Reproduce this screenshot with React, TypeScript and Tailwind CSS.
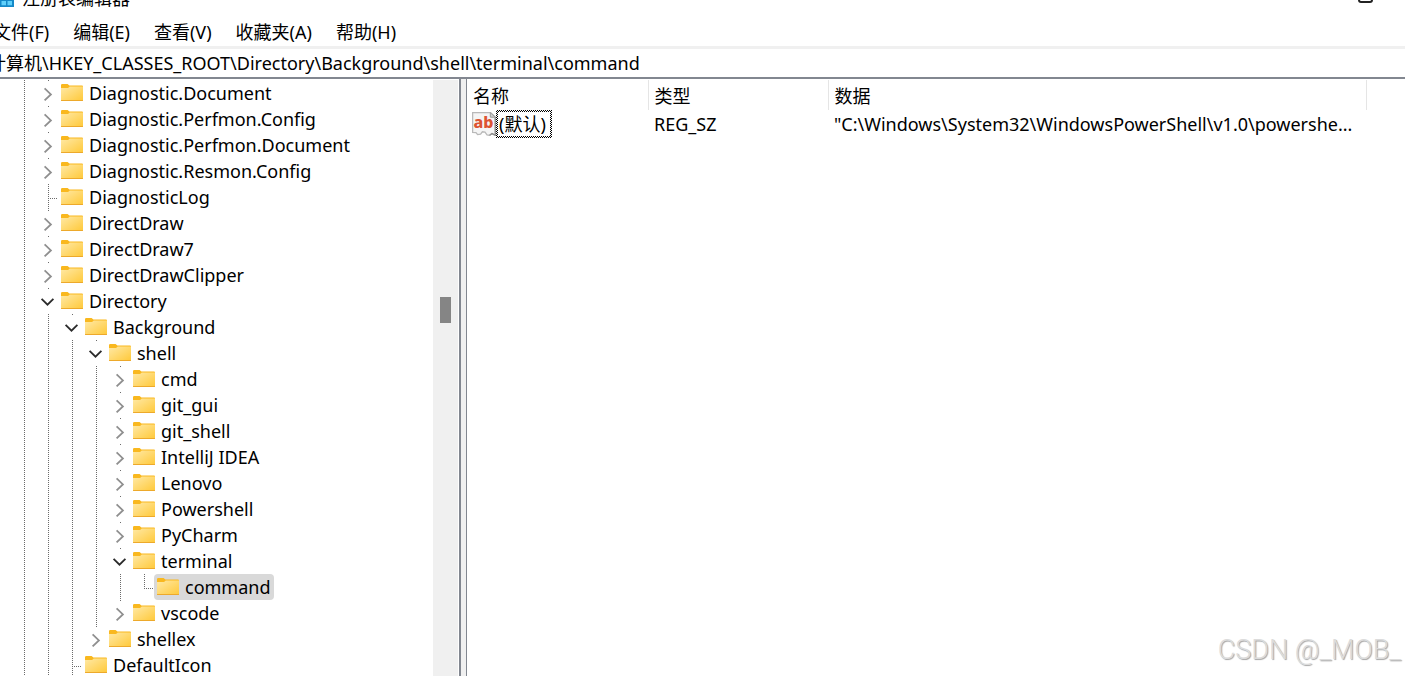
import React from "react";

type NodeKind = "open" | "closed" | "leaf" | "last";

interface TreeRow {
  name: string;
  depth: number;
  kind: NodeKind;
  selected?: boolean;
}

const rows: TreeRow[] = [
  { name: "Diagnostic.Document", depth: 1, kind: "closed" },
  { name: "Diagnostic.Perfmon.Config", depth: 1, kind: "closed" },
  { name: "Diagnostic.Perfmon.Document", depth: 1, kind: "closed" },
  { name: "Diagnostic.Resmon.Config", depth: 1, kind: "closed" },
  { name: "DiagnosticLog", depth: 1, kind: "leaf" },
  { name: "DirectDraw", depth: 1, kind: "closed" },
  { name: "DirectDraw7", depth: 1, kind: "closed" },
  { name: "DirectDrawClipper", depth: 1, kind: "closed" },
  { name: "Directory", depth: 1, kind: "open" },
  { name: "Background", depth: 2, kind: "open" },
  { name: "shell", depth: 3, kind: "open" },
  { name: "cmd", depth: 4, kind: "closed" },
  { name: "git_gui", depth: 4, kind: "closed" },
  { name: "git_shell", depth: 4, kind: "closed" },
  { name: "IntelliJ IDEA", depth: 4, kind: "closed" },
  { name: "Lenovo", depth: 4, kind: "closed" },
  { name: "Powershell", depth: 4, kind: "closed" },
  { name: "PyCharm", depth: 4, kind: "closed" },
  { name: "terminal", depth: 4, kind: "open" },
  { name: "command", depth: 5, kind: "last", selected: true },
  { name: "vscode", depth: 4, kind: "closed" },
  { name: "shellex", depth: 3, kind: "closed" },
  { name: "DefaultIcon", depth: 2, kind: "leaf" },
];

const menus = ["文件(F)", "编辑(E)", "查看(V)", "收藏夹(A)", "帮助(H)"];

function Guide({ kind }: { kind: NodeKind | "line" }) {
  return (
    <svg className="h-[26px] w-6 shrink-0" viewBox="0 0 24 26" fill="none" aria-hidden="true">
      {(kind === "line" || kind === "leaf") && (
        <path d="M14.5 0V26" stroke="#6b6b6b" strokeDasharray="1 1" />
      )}
      {kind === "last" && <path d="M14.5 0V14" stroke="#6b6b6b" strokeDasharray="1 1" />}
      {(kind === "leaf" || kind === "last") && (
        <path d="M14 14.5H24" stroke="#6b6b6b" strokeDasharray="1 1" />
      )}
      {(kind === "open" || kind === "closed") && <path d="M14.5 0V1" stroke="#6b6b6b" />}
      {kind === "closed" && <path d="M10.6 8.4L16.9 14.4L10.6 20.4" stroke="#8f8f8f" strokeWidth="1.8" />}
      {kind === "open" && <path d="M7.6 10.8L13.5 16.7L19.4 10.8" stroke="#2b2b2b" strokeWidth="1.8" />}
    </svg>
  );
}

function Folder() {
  return (
    <svg className="h-[18px] w-[22px] shrink-0" viewBox="0 0 22 18" aria-hidden="true">
      <defs>
        <linearGradient id="folderFace" x1="0" y1="0" x2="1" y2="1">
          <stop offset="0" stopColor="#ffe9a6" />
          <stop offset="1" stopColor="#ffc93a" />
        </linearGradient>
      </defs>
      <path d="M0 1.2Q0 0 1.2 0H6.6L8.4 1.5H21Q22 1.5 22 2.6V6H0Z" fill="#f9b81f" />
      <path d="M0 4H7L8.8 2.4H22V16.6H0Z" fill="url(#folderFace)" />
      <path d="M0 16H22V16.4Q22 17 21.3 17H0.7Q0 17 0 16.4Z" fill="#eda92b" />
    </svg>
  );
}

function StringIcon() {
  return (
    <svg className="h-6 w-6 shrink-0" viewBox="0 0 24 24" aria-hidden="true">
      <path
        d="M0.6 0.6H18.6L23.3 5V23.3L20 21.6L17.6 23.3L15 22.8L13 20.2L10.4 19.8L8.6 22.2L5.6 22.6L4 20.6L0.6 20.4Z"
        fill="#f5f5f5"
        stroke="#b9b9b9"
        strokeWidth="1.3"
      />
      <path d="M23.3 5V23.3L20 21.6L17.6 23.3" fill="none" stroke="#8e8e8e" strokeWidth="1.3" />
      <path d="M18.3 0.7V5.2H23.3Z" fill="#cfcfcf" stroke="#9c9c9c" strokeWidth="1" />
      <text x="1.6" y="15.6" fontSize="16" fontWeight="800" fontFamily="Noto Sans, sans-serif" fill="#dd5433">
        ab
      </text>
    </svg>
  );
}

export default function App() {
  return (
    <div className="relative flex h-screen flex-col overflow-hidden bg-white font-['Noto_Sans','Noto_Sans_CJK_SC',sans-serif] text-[18px] text-black">
      <header className="flex h-[14px] shrink-0 items-end justify-between overflow-hidden pr-8">
        <div className="flex items-end gap-2">
          <svg className="mb-[7px] h-5 w-[14px]" viewBox="0 0 14 20" aria-hidden="true">
            <path d="M0 0H14V20H0Z" fill="#1489c8" />
            <path d="M1.5 6H6V11H1.5ZM7.5 6H12V11H7.5ZM1.5 14H6V18.2H1.5ZM7.5 14H12V18.2H7.5Z" fill="#5fd0fb" />
          </svg>
          <h1 className="mb-[4px] leading-6">注册表编辑器</h1>
        </div>
        <button
          type="button"
          aria-label="最大化"
          className="mb-[11px] h-[14px] w-[15px] rounded-[3px] border-2 border-[#222]"
        />
      </header>

      <nav className="-ml-[7px] flex h-8 shrink-0 items-center gap-6 pt-1">
        {menus.map((m) => (
          <button key={m} type="button" className="whitespace-nowrap leading-6">
            {m}
          </button>
        ))}
      </nav>

      <div className="shrink-0 border-b-2 border-t-[3px] border-b-[#828790] border-t-[#f0f0f0]">
        <input
          aria-label="地址"
          readOnly
          value="计算机\HKEY_CLASSES_ROOT\Directory\Background\shell\terminal\command"
          className="-ml-3 block h-7 w-full bg-transparent pb-[2px] outline-none"
        />
      </div>

      <main className="flex min-h-0 flex-1">
        <nav aria-label="注册表项" className="flex w-[461px] shrink-0 border-r-2 border-[#828790]">
          <ul className="min-w-0 flex-1 overflow-hidden pl-[10px] pt-px">
            {rows.map((r) => (
              <li key={r.name} className="flex h-[26px]">
                {Array.from({ length: r.depth }, (_, i) => (
                  <Guide key={i} kind="line" />
                ))}
                <Guide kind={r.kind} />
                <button
                  type="button"
                  className={
                    "flex items-center gap-[6px] rounded-sm pl-[3px] pr-1 leading-[26px] " +
                    (r.selected ? "bg-[#d9d9d9]" : "")
                  }
                >
                  <Folder />
                  {r.name}
                </button>
              </li>
            ))}
          </ul>
          <div className="mr-px mt-px flex w-[25px] shrink-0 flex-col items-center bg-[#f0f0f0] pt-[217px]">
            <div className="h-[26px] w-[11px] bg-[#858585]" />
          </div>
        </nav>
        <div className="w-[5px] shrink-0 bg-[#f0f0f0]" />
        <section className="min-w-0 flex-1 border-l border-[#828790]">
          <table className="mt-px w-full table-fixed text-left">
            <colgroup>
              <col className="w-[181px]" />
              <col className="w-[180px]" />
              <col />
              <col className="w-[39px]" />
            </colgroup>
            <thead>
              <tr className="h-[30px]">
                <th className="border-r border-[#e5e5e5] p-0 pl-[6px] pt-[2px] font-normal">名称</th>
                <th className="border-r border-[#e5e5e5] p-0 pl-[6px] pt-[2px] font-normal">类型</th>
                <th className="border-r border-[#e5e5e5] p-0 pl-[6px] pt-[2px] font-normal">数据</th>
                <td />
              </tr>
            </thead>
            <tbody>
              <tr className="h-7">
                <td className="p-0 pl-[5px]">
                  <button type="button" className="flex items-center">
                    <StringIcon />
                    <span className="h-7 bg-[repeating-conic-gradient(#000_0_25%,#fff_0_50%)] bg-[length:2px_2px] p-[2px]">
                      <span className="block bg-white pl-px pr-1 leading-6">(默认)</span>
                    </span>
                  </button>
                </td>
                <td className="p-0 pl-[6px]">REG_SZ</td>
                <td className="whitespace-nowrap p-0 pl-[6px]">
                  "C:\Windows\System32\WindowsPowerShell\v1.0\powershe...
                </td>
                <td />
              </tr>
            </tbody>
          </table>
        </section>
      </main>

      <p className="absolute bottom-2 right-1 font-['Roboto',sans-serif] text-[27px] font-light leading-9 text-[#dcdcdc] [text-shadow:1px_1px_1px_#a3a3a3]">
        CSDN @_MOB_
      </p>
    </div>
  );
}
